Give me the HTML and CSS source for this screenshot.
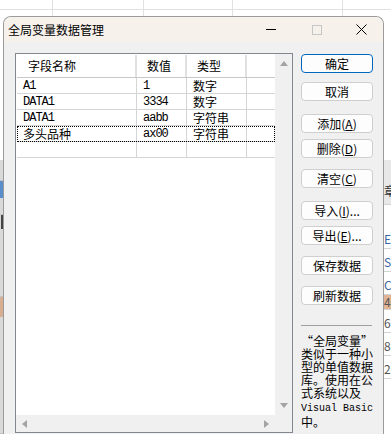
FILE: index.html
```html
<!DOCTYPE html>
<html lang="zh-CN">
<head>
    <meta charset="UTF-8">
    <title>全局变量数据管理</title>
    <link rel="stylesheet" href="styles.css">
</head>
<body>
    <!-- spreadsheet behind the dialog -->
    <div class="sheet">
        <div class="sheet-left">
            <div class="ls ls-top"></div>
            <div class="ls ls-gray h21"></div>
            <div class="ls ls-blue"></div>
            <div class="ls ls-gray h17"></div>
            <div class="ls ls-glyph"></div>
            <div class="ls ls-gray h68"></div>
            <div class="ls ls-tan"></div>
            <div class="ls ls-gray ls-rest"></div>
        </div>
        <div class="sheet-mid"></div>
        <div class="sheet-right">
            <div class="rs rs-top"></div>
            <div class="rs rs-head">章</div>
            <div class="rs rs-e blue">E</div>
            <div class="rs blue">S</div>
            <div class="rs blue">C</div>
            <div class="rs rs-tan">4</div>
            <div class="rs">6</div>
            <div class="rs">8</div>
            <div class="rs">2</div>
        </div>
    </div>

    <div class="dialog">
        <div class="titlebar">
            <div class="title">全局变量数据管理</div>
            <div class="caption-btn">
                <svg width="10" height="1"><rect width="10" height="1" fill="#000"/></svg>
            </div>
            <div class="caption-btn">
                <svg width="10" height="10"><rect x="0.5" y="0.5" width="9" height="9" fill="none" stroke="#c6c6c6"/></svg>
            </div>
            <div class="caption-btn">
                <svg width="11" height="11"><path d="M0.5 0.5L10.5 10.5M10.5 0.5L0.5 10.5" stroke="#000" fill="none"/></svg>
            </div>
        </div>

        <div class="dialog-body">
            <div class="listbox">
                <div class="list-area">
                    <div class="row head">
                        <div class="c first">字段名称</div>
                        <div class="c">数值</div>
                        <div class="c">类型</div>
                        <div class="c"></div>
                    </div>
                    <div class="row">
                        <div class="c lat">A1</div>
                        <div class="c lat">1</div>
                        <div class="c">数字</div>
                        <div class="c"></div>
                    </div>
                    <div class="row">
                        <div class="c lat">DATA1</div>
                        <div class="c lat">3334</div>
                        <div class="c">数字</div>
                        <div class="c"></div>
                    </div>
                    <div class="row">
                        <div class="c lat">DATA1</div>
                        <div class="c lat">aabb</div>
                        <div class="c">字符串</div>
                        <div class="c"></div>
                    </div>
                    <div class="row focus">
                        <div class="c">多头品种</div>
                        <div class="c lat">ax00</div>
                        <div class="c">字符串</div>
                        <div class="c"></div>
                    </div>
                    <div class="row">
                        <div class="c"></div>
                        <div class="c"></div>
                        <div class="c"></div>
                        <div class="c"></div>
                    </div>
                </div>
                <div class="vscroll">
                    <svg width="8" height="5"><path d="M0 5L4 0L8 5Z" fill="#a3a3a3"/></svg>
                    <svg width="8" height="5"><path d="M0 0L8 0L4 5Z" fill="#a3a3a3"/></svg>
                </div>
                <div class="hscroll">
                    <svg width="5" height="8"><path d="M5 0L5 8L0 4Z" fill="#a3a3a3"/></svg>
                    <svg width="5" height="8"><path d="M0 0L5 4L0 8Z" fill="#a3a3a3"/></svg>
                </div>
                <div class="corner"></div>
            </div>

            <div class="side">
                <button class="btn btn-default">确定</button>
                <button class="btn mid">取消</button>
                <button class="btn far">添加(<u>A</u>)</button>
                <button class="btn near">删除(<u>D</u>)</button>
                <button class="btn">清空(<u>C</u>)</button>
                <button class="btn far">导入(<u>I</u>)...</button>
                <button class="btn near">导出(<u>E</u>)...</button>
                <button class="btn">保存数据</button>
                <button class="btn">刷新数据</button>
                <div class="sep"></div>
                <div class="desc">“全局变量”<br>类似于一种小<br>型的单值数据<br>库。使用在公<br>式系统以及<br><span class="lat">Visual Basic</span><br>中。</div>
            </div>
        </div>
    </div>
</body>
</html>
```

FILE: styles.css
```css
body {
    margin: 0;
    font-family: "Noto Sans CJK SC", sans-serif;
    font-size: 12px;
    color: #000;
    overflow: hidden;
}

/* ---- spreadsheet in the background ---- */
.sheet {
    display: flex;
    height: 434px;
    background:
        linear-gradient(#e1e1e1, #e1e1e1) 0 9px / 100% 1px no-repeat,
        linear-gradient(#e1e1e1, #e1e1e1) 52px 0 / 1px 100% no-repeat,
        linear-gradient(#e1e1e1, #e1e1e1) 143px 0 / 1px 100% no-repeat,
        linear-gradient(#e1e1e1, #e1e1e1) 232px 0 / 1px 100% no-repeat,
        linear-gradient(#e1e1e1, #e1e1e1) 342px 0 / 1px 100% no-repeat,
        #fff;
}
.sheet-left {
    width: 3px;
    display: flex;
    flex-direction: column;
}
.sheet-mid {
    flex: 1;
}
.sheet-right {
    width: 7px;
    overflow: hidden;
    display: flex;
    flex-direction: column;
}
.ls-top { height: 160px; }
.ls-gray { background: #d9d9d9; border-bottom: 1px solid #c4c4c4; box-sizing: border-box; }
.h21 { height: 21px; }
.h17 { height: 17px; }
.h68 { height: 68px; }
.ls-blue { height: 17px; background: #5a8dcc; }
.ls-glyph { height: 14px; background: linear-gradient(90deg, #d9d9d9 0 1px, #444 1px); }
.ls-tan { height: 20px; background: #d8ae92; }
.ls-rest { flex: 1; }

.rs {
    height: 23px;
    box-sizing: border-box;
    border-bottom: 1px solid #d4d4d4;
    display: flex;
    align-items: flex-end;
    line-height: 14px;
    padding-bottom: 2px;
    color: #555;
    font-size: 12px;
    white-space: nowrap;
}
.rs-top { height: 160px; border-bottom: none; }
.rs-head { height: 45px; background: #e8e8e8; color: #333; padding-bottom: 6px; }
.rs-e { height: 44px; }
.rs-tan { height: 15px; background: #e2b496; padding-bottom: 0; }
.blue { color: #3b66a3; }

/* ---- dialog ---- */
.dialog {
    position: absolute;
    left: 3px;
    top: 16px;
    width: 381px;
    height: 418px;
    box-sizing: border-box;
    border: 1px solid #9b9b9b;
    border-bottom: none;
    border-radius: 8px 8px 0 0;
    background: #f0f0f0;
    overflow: hidden;
}
.titlebar {
    display: flex;
    align-items: center;
    height: 25px;
    background: #f7f1ec;
}
.title {
    flex: 1;
    padding-left: 4px;
    font-size: 12px;
}
.caption-btn {
    width: 46px;
    height: 25px;
    display: flex;
    align-items: center;
    justify-content: center;
}
.caption-btn:last-child {
    width: 43px;
}
.caption-btn svg {
    display: block;
}

.dialog-body {
    display: flex;
    gap: 8px;
    padding: 11px 0 0 11px;
}

/* ---- list box ---- */
.listbox {
    width: 278px;
    height: 380px;
    flex-shrink: 0;
    box-sizing: border-box;
    border: 1px solid #828790;
    background: #fff;
    display: grid;
    grid-template-columns: 1fr 17px;
    grid-template-rows: 1fr 17px;
}
.list-area {
    padding: 1px 0 0 1px;
    overflow: hidden;
}
.row {
    display: grid;
    grid-template-columns: 120px 50px 60px 26px;
    height: 16px;
    box-sizing: border-box;
    border-bottom: 1px solid #d5d5d5;
}
.row .c {
    border-right: 1px solid #d5d5d5;
    padding-left: 6px;
    line-height: 15px;
    white-space: nowrap;
    overflow: hidden;
}
.row .c.lat {
    line-height: 17px;
}
.row .c:last-child {
    border-right: none;
}
.row.head {
    height: 23px;
    border-bottom: 1px solid #c8c8c8;
}
.row.head .c {
    border-right: 2px solid #e0e0e0;
    padding-left: 10px;
    line-height: 22px;
}
.row.head .c.first {
    padding-left: 11px;
}
.row.head .c:last-child {
    border-right: none;
}
.row.focus {
    outline: 1px dotted #000;
    outline-offset: -1px;
}
.lat {
    font-family: "Liberation Mono", monospace;
    font-size: 12px;
    letter-spacing: -1px;
}

.vscroll {
    background: #f0f0f0;
    display: flex;
    flex-direction: column;
    align-items: center;
    justify-content: space-between;
    padding: 7px 0 7px;
}
.hscroll {
    background: #f0f0f0;
    display: flex;
    align-items: center;
    justify-content: space-between;
    padding: 0 6px;
}
.corner {
    background: #f0f0f0;
}
.vscroll svg, .hscroll svg {
    display: block;
}

/* ---- buttons on the right ---- */
.side {
    width: 72px;
    display: flex;
    flex-direction: column;
    padding-top: 1px;
}
.btn {
    height: 19px;
    margin: 11px 0 0;
    padding: 0;
    box-sizing: border-box;
    border: 1px solid #cfcfcf;
    border-radius: 4px;
    background: #fdfdfd;
    font-family: "Noto Sans CJK SC", sans-serif;
    font-size: 12px;
    line-height: 17px;
    text-align: center;
    color: #000;
}
.btn-default {
    margin-top: 0;
    border-color: #0067c0;
}
.btn.mid { margin-top: 9px; }
.btn.far { margin-top: 13px; }
.btn.near { margin-top: 6px; }
.btn u {
    text-underline-offset: 1px;
}
.sep {
    margin-top: 20px;
    border-top: 1px solid #a0a0a0;
    width: 71px;
}
.desc {
    margin-top: 8px;
    font-size: 12px;
    line-height: 13px;
    white-space: nowrap;
}
.desc .lat {
    font-size: 10px;
    letter-spacing: 0;
}
```
